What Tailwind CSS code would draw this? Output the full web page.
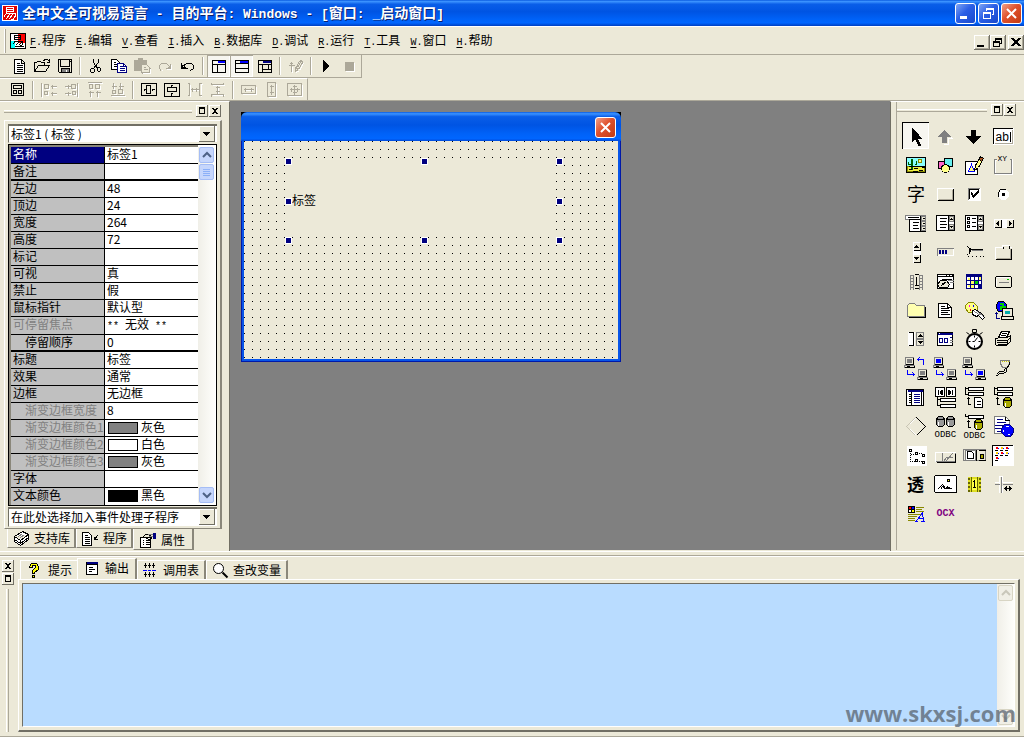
<!DOCTYPE html>
<html lang="zh-CN">
<head>
  <meta charset="UTF-8" />
  <title>全中文全可视易语言</title>
  <script src="https://cdn.jsdelivr.net/npm/@tailwindcss/browser@4"></script>
</head>
<body class="h-screen flex flex-col overflow-hidden bg-[#ece9d8] text-black text-[12px] leading-[16px] font-['Noto_Sans_CJK_SC',sans-serif] [shape-rendering:crispEdges] [&_svg]:block [&_svg]:shrink-0">

  <!-- shared icon parts -->
  <svg width="0" height="0" class="absolute">
    <symbol id="pc" viewBox="-.5 -.5 12 11" fill="#ece9d8" stroke="#808080">
      <path d="M1 0h8v7h-8z"/><path d="M3 2h4v3h-4z" fill="currentColor" stroke="currentColor"/>
      <path d="M0 8h10v2h-10z"/><path d="M9 0v7h-8M10 8v2h-10" fill="none" stroke="#000"/><path d="M2 9h3" stroke="#000"/>
    </symbol>
    <symbol id="db" viewBox="-.5 -.5 9 11" stroke="#000" fill="currentColor">
      <path d="M0 2v6l2 2h4l2-2v-6z"/><path d="M2 0h4l2 2-2 1h-4l-2-1z"/><path d="M2 5v4" stroke="#fff"/>
    </symbol>
    <symbol id="max" viewBox="0 0 12 12"><path d="M3 2h6v7H3zM4 4v4h4V4z" fill-rule="evenodd"/></symbol>
    <symbol id="cls" viewBox="0 0 12 12"><path d="M3 3h2v1h2V3h2v1H8v1H7v2h1v1h1v1H7V8H5v1H3V8h1V7h1V5H4V4H3z"/></symbol>
  </svg>

  <header class="h-[26px] shrink-0 flex items-center px-[2px] gap-1 text-white bg-[linear-gradient(#0a5be0_0%,#3c93ff_6%,#0a5ee8_16%,#0054e3_45%,#0062f8_75%,#0066ff_88%,#003fc0_100%)]">
    <svg class="size-4" viewBox="0 0 16 16"><path fill="#fff" d="M0 0h16v16H0z"/><path fill="#e00000" d="M1 1h14v14H1z"/><path d="M4.500 2.500h7v4h-7zM4 4.500h7M5 7.500l-3 4M4 8.500h9v3l-2 3h-2M8 9l-4 5M11 9l-4 5" fill="none" stroke="#fff"/></svg>
    <h1 class="flex-1 whitespace-pre text-[14px] leading-[18px] font-bold [text-shadow:1px_1px_#0a1f6b] [&_span]:font-['Liberation_Mono'] [&_span]:text-[13px]">全中文全可视易语言<span> - </span>目的平台<span>: Windows - [</span>窗口<span>: _</span>启动窗口<span>]</span></h1>
    <div class="flex gap-[2px] [&_svg]:size-[19px]">
      <button aria-label="最小化" class="size-[21px] rounded-[3px] border border-white bg-[linear-gradient(135deg,#7ea5f4,#2b5fe6_45%,#1848cc)]"><svg viewBox="0 0 19 19"><path d="M4 12h7v3H4z" fill="#fff"/></svg></button>
      <button aria-label="还原" class="size-[21px] rounded-[3px] border border-white bg-[linear-gradient(135deg,#7ea5f4,#2b5fe6_45%,#1848cc)]"><svg viewBox="-.5 -.5 19 19"><path d="M7 6v-2h7v6h-2M7 5h7M4 8h7v6h-7zM4 9h7" fill="none" stroke="#fff"/></svg></button>
      <button aria-label="关闭" class="size-[21px] rounded-[3px] border border-white bg-[linear-gradient(135deg,#f0a08a,#e0512c_45%,#c23a12)]"><svg viewBox="0 0 19 19" shape-rendering="auto"><path d="M5 5l9 9M14 5l-9 9" stroke="#fff" stroke-width="2"/></svg></button>
    </div>
  </header>

  <nav class="h-[29px] shrink-0 flex items-center pl-1 border-b border-b-[#aca899] border-t border-t-white">
    <span class="w-[2px] h-6 border-l border-white bg-[#aca899] mr-1"></span>
    <svg class="size-4 mr-1" viewBox="-.5 -.5 16 16" fill="none"><path d="M0 0h15v15h-15z" fill="#fff" stroke="#000"/><path d="M8 1h6v8h-6z" fill="#f00" stroke="#f00"/><path d="M1 8h3v6h-3z" fill="#0ff" stroke="#0ff"/><path d="M4 2h6v4h-6zM4 4h6M3 8h9v3M5 8l-3 3M8 9l-3 3M11 9l-3 3M4 13h9M12 11l-3 2" stroke="#000"/></svg>
    <ul class="flex-1 flex gap-[10px] pt-[2px] [&_button]:flex [&_button]:items-baseline [&_u]:font-['Liberation_Mono'] [&_u]:text-[10px] [&_span]:font-['Liberation_Mono'] [&_span]:text-[10px] [&_u]:underline-offset-2">
      <li><button><u>F</u><span>.</span>程序</button></li>
      <li><button><u>E</u><span>.</span>编辑</button></li>
      <li><button><u>V</u><span>.</span>查看</button></li>
      <li><button><u>I</u><span>.</span>插入</button></li>
      <li><button><u>B</u><span>.</span>数据库</button></li>
      <li><button><u>D</u><span>.</span>调试</button></li>
      <li><button><u>R</u><span>.</span>运行</button></li>
      <li><button><u>T</u><span>.</span>工具</button></li>
      <li><button><u>W</u><span>.</span>窗口</button></li>
      <li><button><u>H</u><span>.</span>帮助</button></li>
    </ul>
    <div class="flex pt-1 [&_svg]:w-4 [&_svg]:h-[15px] [&_button]:shadow-[inset_-1px_-1px_#716f64,inset_1px_1px_#fff,inset_-2px_-2px_#aca899]">
      <button aria-label="最小化窗口"><svg viewBox="0 0 16 15"><path d="M3 10h7v2H3z"/></svg></button>
      <button aria-label="还原窗口"><svg viewBox="-.5 -.5 16 15" fill="none" stroke="#000"><path d="M5 5v-2h6v5h-2M5 4h6M3 6h6v5h-6zM3 7h6"/></svg></button>
      <button aria-label="关闭窗口" class="ml-[2px]"><svg viewBox="0 0 16 15"><path d="M3 3h3v1h1v1h2V4h1V3h3v1h-1v1h-1v1h-1v2h1v1h1v1h1v1h-3v-1H9V9H7v1H6v1H3v-1h1V9h1V8h1V6H5V5H4V4H3z"/></svg></button>
    </div>
  </nav>

  <!-- toolbars -->
  <div class="h-[23px] shrink-0 flex [&_svg]:size-[18px] [&_svg]:fill-none [&_button]:w-[23px] [&_button]:h-[22px] [&_button]:flex [&_button]:items-center [&_button]:justify-center">
    <div class="flex items-center pl-[7px] border-r border-b border-[#aca899]">
      <button aria-label="新建"><svg viewBox="-.5 -.5 18 18" stroke="#000"><path d="M4 2h7l3 3v11h-10zM11 2v4h3" fill="#fff"/><path d="M6 6h3M6 8h6M6 10h6M6 12h6M6 14h6"/></svg></button>
      <button aria-label="打开"><svg viewBox="-.5 -.5 18 18" stroke="#000"><path d="M1 14v-9h2l1-1h3l1 1h3v3M1 14l4-6h11l-4 6zM10 3l2-1h2l2 2M16 1v4h-3"/></svg></button>
      <button aria-label="保存"><svg viewBox="-.5 -.5 18 18" stroke="#000"><path d="M2 2h13v13h-12l-1-1zM4 2v7h9v-7M13 4h1"/><path d="M5 11h8v4h-8z" fill="#808080"/><path d="M10 12v2" stroke="#fff"/></svg></button>
      <span class="w-[2px] h-[18px] mx-[3px] border-l border-[#aca899] bg-white"></span>
      <button aria-label="剪切"><svg viewBox="-.5 -.5 18 18" stroke="#000"><path d="M6 1v4l4 6M11 1v4l-5 6M4 11h2l1 1v2l-1 1h-2l-1-1v-2zM10 10h2l1 1v2l-1 1h-1l-1-1z"/></svg></button>
      <button aria-label="复制"><svg viewBox="-.5 -.5 18 18" stroke="#000"><path d="M1 2h5l3 3v7h-8z" fill="#fff"/><path d="M3 5h2M3 7h4M3 9h4"/><path d="M7 6h6l3 3v6h-9z" fill="#fff" stroke="#000080"/><path d="M9 9h3M9 11h5M9 13h5M13 6v3h3" stroke="#000080"/></svg></button>
      <button aria-label="粘贴" disabled><svg viewBox="-.5 -.5 18 18" stroke="#aca899"><path d="M1 3h12v10h-12zM5 1h4v2h-4z" fill="#aca899"/><path d="M8 7h5l3 3v5h-8z" fill="#ece9d8"/><path d="M10 10h2M10 12h4M17 10v6h-9" /><path d="M17 11v5h-8" stroke="#fff"/></svg></button>
      <button aria-label="重做" disabled><svg viewBox="-.5 -.5 18 18" stroke="#aca899"><path d="M15 7v5h-5M5 13h1" stroke="#fff"/><path d="M4 12l-1-1v-3l2-2h5l4 4M14 6v5h-5M13 8v2M12 9v1M4 11v2"/></svg></button>
      <button aria-label="撤消"><svg viewBox="-.5 -.5 18 18" stroke="#000"><path d="M2 5v6h6M3 7v3M4 9h1M3 9l4-3h5l2 2v3l-3 2M3 10h3M5 8v2"/></svg></button>
      <span class="w-[2px] h-[18px] mx-[3px] border-l border-[#aca899] bg-white"></span>
      <button aria-label="支持库面板" class="bg-[#f7f6f0] shadow-[inset_1px_1px_#aca899,inset_-1px_-1px_#fff]"><svg viewBox="-.5 -.5 18 18" stroke="#000"><path d="M2 3h13v12h-13zM2 7h13M7 7v8"/><path d="M7 4h7M7 5h7" stroke="#00f"/><path d="M4 5h2" stroke="#fff"/></svg></button>
      <button aria-label="输出面板" class="bg-[#f7f6f0] shadow-[inset_1px_1px_#aca899,inset_-1px_-1px_#fff]"><svg viewBox="-.5 -.5 18 18" stroke="#000"><path d="M2 3h13v12h-13zM2 6h13M2 11h13"/><path d="M6 4h8M6 5h8" stroke="#00f"/></svg></button>
      <button aria-label="组件面板"><svg viewBox="-.5 -.5 18 18" stroke="#000"><path d="M2 3h13v12h-13zM2 7h13M6 7v8M6 12h9M12 7v5"/><path d="M6 4h8M6 5h8" stroke="#000080"/></svg></button>
      <span class="w-[2px] h-[18px] mx-[3px] border-l border-[#aca899] bg-white"></span>
      <button aria-label="编辑" disabled><svg viewBox="-.5 -.5 18 18" stroke="#aca899"><path d="M5 15v-6M9 15l3-2 4-7" stroke="#fff"/><path d="M4 14v-9M2 7l2-2 2 2M1 8h6M12 4l-4 7v3l3-2 4-7-1-2zM10 10l3-5M9 11l2 1"/></svg></button>
      <span class="w-[2px] h-[18px] mx-[3px] border-l border-[#aca899] bg-white"></span>
      <button aria-label="运行"><svg viewBox="0 0 18 18"><path d="M5 3l6 6-6 6z" fill="#000"/></svg></button>
      <button aria-label="停止" disabled><svg viewBox="0 0 18 18"><path d="M5 6h9v9H5z" fill="#fff"/><path d="M4 5h9v9H4z" fill="#aca899"/></svg></button>
    </div>
  </div>
  <div class="h-[22px] shrink-0 flex [&_svg]:size-[18px] [&_svg]:fill-none [&_button]:w-[23px] [&_button]:h-[22px] [&_button]:flex [&_button]:items-center [&_button]:justify-center">
    <div class="flex items-center pl-[6px] pr-[1px] border-r border-t border-t-white border-r-[#aca899]">
      <button aria-label="窗体"><svg viewBox="-.5 -.5 18 18" stroke="#000"><path d="M2 2h12v12h-12zM4 4h8v3h-8zM4 9h3v3h-3zM9 9h3v3h-3z"/></svg></button>
      <span class="w-[2px] h-[18px] mx-[3px] border-l border-[#aca899] bg-white"></span>
      <button aria-label="左对齐" disabled><svg viewBox="-.5 -.5 18 18" stroke="#aca899"><path d="M2 2v14M5 8h4v-4M5 14h3v-4M12 13h4M12 6h4" stroke="#fff"/><path d="M1 1v14M4 3h4v4h-4zM4 10h3v3h-3zM10 5h6M12 3v4M10 12h6M12 10v4"/></svg></button>
      <button aria-label="右对齐" disabled><svg viewBox="-.5 -.5 18 18" stroke="#aca899"><path d="M15 2v14M9 8h4v-4M10 14h3v-3M2 6h6M2 13h6" stroke="#fff"/><path d="M14 1v14M8 3h4v4h-4zM9 10h3v3h-3zM1 5h6M5 3v4M1 12h6M5 10v4"/></svg></button>
      <button aria-label="顶对齐" disabled><svg viewBox="-.5 -.5 18 18" stroke="#aca899"><path d="M2 2h14M4 8h3M10 8h4v-4M5 10v6M12 10v6" stroke="#fff"/><path d="M1 1h14M3 3h3v4h-3zM9 3h4v4h-4zM4 9v6M2 11h5M11 9v6M9 11h5"/></svg></button>
      <button aria-label="底对齐" disabled><svg viewBox="-.5 -.5 18 18" stroke="#aca899"><path d="M2 15h14M4 13h3M10 13h4v-4M5 2v6M12 2v6" stroke="#fff"/><path d="M1 14h14M3 9h3v3h-3zM9 8h4v4h-4zM4 1v6M2 5h5M11 1v6M9 5h5"/></svg></button>
      <span class="w-[2px] h-[18px] mx-[3px] border-l border-[#aca899] bg-white"></span>
      <button aria-label="水平居中"><svg viewBox="-.5 -.5 18 18" stroke="#000"><path d="M1 2h15v12h-15zM6 4h4v8h-4zM3 8h2M11 8h3M4 7v2M12 7v2"/></svg></button>
      <button aria-label="垂直居中"><svg viewBox="-.5 -.5 18 18" stroke="#000"><path d="M1 2h15v13h-15zM4 6h9v4h-9zM8 3v2M8 11v3M7 4h2M7 12h2"/></svg></button>
      <button aria-label="水平等距" disabled><svg viewBox="-.5 -.5 18 18" stroke="#aca899"><path d="M4 3v12M5 9h8M16 3h-1v12" stroke="#fff"/><path d="M1 2h2v12h-2M15 2h-2v12h2M4 8h8M6 6v4M10 6v4"/></svg></button>
      <button aria-label="垂直等距" disabled><svg viewBox="-.5 -.5 18 18" stroke="#aca899"><path d="M3 4h12M3 14h12M9 5v7" stroke="#fff"/><path d="M2 1v2h12v-2M2 15v-2h12v2M8 4v8M6 6h4M6 10h4"/></svg></button>
      <span class="w-[2px] h-[18px] mx-[3px] border-l border-[#aca899] bg-white"></span>
      <button aria-label="同宽" disabled><svg viewBox="-.5 -.5 18 18" stroke="#aca899"><path d="M2 13h14v-8M4 9h8" stroke="#fff"/><path d="M1 4h14v8h-14zM3 8h10M5 6v4M11 6v4"/></svg></button>
      <button aria-label="同高" disabled><svg viewBox="-.5 -.5 18 18" stroke="#aca899"><path d="M5 16h8v-14" stroke="#fff"/><path d="M4 1h8v14h-8zM8 3v10M6 5h4M6 11h4"/></svg></button>
      <button aria-label="同大小" disabled><svg viewBox="-.5 -.5 18 18" stroke="#aca899"><path d="M2 15h14v-12" stroke="#fff"/><path d="M1 2h14v12h-14zM3 8h10M8 3v10M5 6v4M11 6v4M6 5h4M6 11h4"/></svg></button>
    </div>
  </div>

  <main class="flex-1 min-h-0 flex border-t border-[#aca899]">

    <!-- property panel -->
    <aside class="w-[230px] shrink-0 flex flex-col pl-1 border-t border-white border-r border-r-[#716f64]">
      <div class="h-[18px] shrink-0 flex items-center gap-[1px]">
        <span class="flex-1 h-[3px] mr-[3px] border-t border-white border-b border-b-[#aca899]"></span>
        <button aria-label="停靠" class="size-3 shadow-[inset_-1px_-1px_#716f64,inset_1px_1px_#fff]"><svg class="size-3"><use href="#max"/></svg></button>
        <button aria-label="关闭面板" class="size-3 mr-[8px] shadow-[inset_-1px_-1px_#716f64,inset_1px_1px_#fff]"><svg class="size-3"><use href="#cls"/></svg></button>
      </div>
      <section class="flex-1 min-h-0 w-[218px] flex flex-col gap-[1px] pl-[3px] pr-[3px] pt-[3px] pb-[1px] border-t border-l border-white border-r-2 border-r-[#8a877a] border-b border-b-[#8a877a]">
        <div class="relative h-[19px] shrink-0">
          <select aria-label="组件" class="w-full h-full appearance-none bg-white pl-[2px] border-t-2 border-l border-[#716f64] border-b border-b-[#ece9d8]"><option>标签1 ( 标签 )</option></select>
          <svg class="absolute right-[2px] top-[2px] w-4 h-4 bg-[#ece9d8] shadow-[inset_-1px_-1px_#716f64,inset_1px_1px_#fff] pointer-events-none" viewBox="0 0 16 16"><path d="M4 6h7v1H4zM5 7h5v1H5zM6 8h3v1H6zM7 9h1v1H7z"/></svg>
        </div>
        <div class="flex-1 min-h-0 flex border border-black bg-white pr-[1px]">
          <div class="flex-1 border-t-2 border-l-2 border-[#8a877a]">
            <table class="w-full table-fixed border-separate border-spacing-0 text-left [&_th]:font-normal [&_th]:bg-[#c0c0c0] [&_th]:h-[17px] [&_td]:h-[17px] [&_th]:p-0 [&_th]:pl-[2px] [&_td]:p-0 [&_td]:pl-[2px] [&_th]:border-b [&_td]:border-b [&_th]:border-r [&_th]:border-black [&_td]:border-black [&_th]:whitespace-nowrap [&_td]:whitespace-nowrap [&_th]:align-top [&_td]:align-top [&_tr]:leading-[14px]">
              <colgroup><col class="w-[94px]"><col></colgroup>
              <tbody>
                <tr><th scope="row" class="bg-[#000080]! text-white">名称</th><td>标签1</td></tr>
                <tr class="[&>*]:border-b-2!"><th scope="row">备注</th><td></td></tr>
                <tr><th scope="row">左边</th><td>48</td></tr>
                <tr><th scope="row">顶边</th><td>24</td></tr>
                <tr><th scope="row">宽度</th><td>264</td></tr>
                <tr><th scope="row">高度</th><td>72</td></tr>
                <tr><th scope="row">标记</th><td></td></tr>
                <tr><th scope="row">可视</th><td>真</td></tr>
                <tr><th scope="row">禁止</th><td>假</td></tr>
                <tr><th scope="row">鼠标指针</th><td>默认型</td></tr>
                <tr><th scope="row" class="text-[#808080]">可停留焦点</th><td class="whitespace-pre! [&_span]:font-['Liberation_Mono'] [&_span]:text-[10px]"><span>** </span>无效<span> **</span></td></tr>
                <tr class="[&>*]:border-b-2!"><th scope="row" class="pl-[14px]!">停留顺序</th><td>0</td></tr>
                <tr><th scope="row">标题</th><td>标签</td></tr>
                <tr><th scope="row">效果</th><td>通常</td></tr>
                <tr><th scope="row">边框</th><td>无边框</td></tr>
                <tr><th scope="row" class="pl-[14px]! text-[#808080]">渐变边框宽度</th><td>8</td></tr>
                <tr><th scope="row" class="pl-[14px]! text-[#808080]">渐变边框颜色1</th><td><div class="flex items-center gap-[3px] pl-[1px]"><span class="w-[30px] h-3 mt-[2px] border border-black bg-[#808080]"></span>灰色</div></td></tr>
                <tr><th scope="row" class="pl-[14px]! text-[#808080]">渐变边框颜色2</th><td><div class="flex items-center gap-[3px] pl-[1px]"><span class="w-[30px] h-3 mt-[2px] border border-black bg-white"></span>白色</div></td></tr>
                <tr><th scope="row" class="pl-[14px]! text-[#808080]">渐变边框颜色3</th><td><div class="flex items-center gap-[3px] pl-[1px]"><span class="w-[30px] h-3 mt-[2px] border border-black bg-[#808080]"></span>灰色</div></td></tr>
                <tr><th scope="row">字体</th><td></td></tr>
                <tr class="[&>*]:border-b-0!"><th scope="row">文本颜色</th><td><div class="flex items-center gap-[3px] pl-[1px]"><span class="w-[30px] h-3 mt-[2px] border border-black bg-black"></span>黑色</div></td></tr>
              </tbody>
            </table>
          </div>
          <div class="w-[17px] flex flex-col mt-[2px] mb-[2px] px-[1px] bg-[linear-gradient(90deg,#f0efe8,#fefefb)]">
            <button aria-label="向上" class="h-4 rounded-[2px] border border-[#a5bdf5] bg-[#c6d6fc]"><svg class="w-[13px] h-[14px]" viewBox="0 0 13 14" shape-rendering="auto"><path d="M3 9l4-4 4 4" fill="none" stroke="#4d6185" stroke-width="2"/></svg></button>
            <div class="h-4 mt-[1px] rounded-[2px] border border-[#a5bdf5] bg-[#c6d6fc] flex items-center justify-center"><svg class="size-[7px]" viewBox="0 0 7 7"><path d="M0 0h7v1H0zM0 2h7v1H0zM0 4h7v1H0zM0 6h7v1H0z" fill="#8cb0f8"/></svg></div>
            <div class="flex-1"></div>
            <button aria-label="向下" class="h-4 rounded-[2px] border border-[#a5bdf5] bg-[#c6d6fc]"><svg class="w-[13px] h-[14px]" viewBox="0 0 13 14" shape-rendering="auto"><path d="M3 5l4 4 4-4" fill="none" stroke="#4d6185" stroke-width="2"/></svg></button>
          </div>
        </div>
        <div class="relative h-5 shrink-0">
          <select aria-label="事件处理子程序" class="w-full h-full appearance-none bg-white pl-[2px] pb-[2px] border-t-2 border-l border-[#716f64] border-b border-b-[#ece9d8]"><option>在此处选择加入事件处理子程序</option></select>
          <svg class="absolute right-[2px] top-[2px] w-4 h-4 bg-[#ece9d8] shadow-[inset_-1px_-1px_#716f64,inset_1px_1px_#fff] pointer-events-none" viewBox="0 0 16 16"><path d="M4 6h7v1H4zM5 7h5v1H5zM6 8h3v1H6zM7 9h1v1H7z"/></svg>
        </div>
      </section>
      <div class="h-[22px] shrink-0 flex items-start pl-[3px] [&_svg]:size-[18px] [&_svg]:fill-none [&_button]:flex [&_button]:items-center [&_button]:whitespace-nowrap [&_button]:border-l [&_button]:border-white [&_button]:border-r-2 [&_button]:border-r-[#8a877a] [&_button]:border-b [&_button]:border-b-[#8a877a]">
        <button class="w-[69px] h-[19px] pl-1 gap-1"><svg viewBox="-.5 -.5 18 18" stroke="#000"><path d="M2 7l8-5 6 3-8 6zM2 7v3l6 4 8-6v-3M2 10v2l6 4 8-6v-2" fill="#fff"/><path d="M2 10l6 4 8-6M8 11v3"/><path d="M6 7l4-3M8 8l4-3" stroke="#808080"/></svg>支持库</button>
        <button class="w-[57px] h-[19px] pl-[3px] gap-[5px]"><svg viewBox="-.5 -.5 18 18" stroke="#000"><path d="M2 3h6l3 3v10h-9z" fill="#fff"/><path d="M4 6h3M4 8h5M4 10h5M4 12h5M4 14h5M14 7v3h3M14 10l3-4"/></svg>程序</button>
        <button class="w-[61px] h-[21px] pl-[5px] gap-1 pt-[2px]"><svg viewBox="-.5 -.5 18 18" stroke="#000"><path d="M1 6h10v10h-10z" fill="#fff"/><path d="M3 9h1M6 9h4M3 11h1M6 11h4M3 13h1M6 13h4M3 6l3-3h3l3 2v2l-3 1-3-2"/><path d="M14 2h2v5h-2z" fill="#000080" stroke="#000080"/><path d="M8 3h5M9 5h4" stroke="#808080"/></svg>属性</button>
      </div>
    </aside>

    <!-- form designer -->
    <section class="flex-1 relative bg-[#808080] mb-[1px]">
      <div class="absolute left-[11px] top-[11px] w-[380px] h-[250px] flex flex-col bg-black">
        <div class="h-[29px] shrink-0 rounded-t-[6px] flex items-center justify-end pr-[5px] bg-[linear-gradient(#0a5be0_0%,#3c93ff_6%,#0a5ee8_16%,#0054e3_45%,#0062f8_75%,#0066ff_92%,#0048d8_100%)]">
          <button aria-label="关闭窗体" class="size-[21px] mt-[2px] rounded-[3px] border border-white bg-[linear-gradient(135deg,#f0a08a,#e0512c_45%,#c23a12)]"><svg class="size-[19px]" viewBox="0 0 19 19" shape-rendering="auto"><path d="M5 5l9 9M14 5l-9 9" stroke="#fff" stroke-width="2"/></svg></button>
        </div>
        <div class="flex-1 flex border border-t-0 border-[#0019a8]">
          <div class="flex-1 relative bg-[#ece9d8] border-x-[2px] border-b-[2px] border-[#0855e8]">
            <svg class="absolute inset-0 w-full h-full"><pattern id="dots" width="8" height="8" patternUnits="userSpaceOnUse"><path d="M0 0h1v1H0z"/></pattern><path d="M0 0h374v218H0z" fill="url(#dots)"/></svg>
            <div class="absolute left-[48px] top-[24px] w-[264px] h-[72px] bg-[#ece9d8] flex items-center pb-[2px]">标签</div>
            <div class="absolute left-[41px] top-[17px] w-[278px] h-[86px] flex flex-col justify-between [&_i]:block [&_i]:size-[7px] [&_i]:bg-[#000080] [&_i]:border [&_i]:border-white">
              <div class="flex justify-between"><i></i><i></i><i></i></div>
              <div class="flex justify-between"><i></i><i></i></div>
              <div class="flex justify-between"><i></i><i></i><i></i></div>
            </div>
          </div>
        </div>
      </div>
    </section>

    <!-- component toolbox -->
    <aside class="w-[134px] shrink-0 pl-[5px] pb-[1px] border-t border-white border-l border-l-[#716f64]">
      <div class="h-full border-l border-[#aca899]">
        <div class="h-[16px] flex items-center gap-[1px]">
          <span class="flex-1 h-[3px] mr-[3px] border-t border-white border-b border-b-[#aca899]"></span>
          <button aria-label="停靠工具箱" class="size-3 shadow-[inset_-1px_-1px_#716f64,inset_1px_1px_#fff]"><svg class="size-3"><use href="#max"/></svg></button>
          <button aria-label="关闭工具箱" class="size-3 mr-[8px] shadow-[inset_-1px_-1px_#716f64,inset_1px_1px_#fff]"><svg class="size-3"><use href="#cls"/></svg></button>
        </div>
        <div class="grid grid-cols-[repeat(4,27px)] gap-[2px] pl-[5px] pt-1 [&_button]:size-[27px] [&_button>svg]:size-[27px] [&_button>svg]:fill-none [&_button>svg]:stroke-black [&_text]:fill-black [&_text]:stroke-none">
          <button aria-label="选择" class="bg-[#f7f6f0] shadow-[inset_1px_1px_#000,inset_-1px_-1px_#fff]"><svg viewBox="-.5 -.5 27 27"><path d="M10 6v13l3-3 3 7h2l-3-7h4z" fill="#000"/></svg></button>
          <button aria-label="上移"><svg viewBox="-.5 -.5 27 27"><path d="M14 9l7 7h-4v6h-5" stroke="#fff"/><path d="M13 8l6 6h-4v6h-4v-6h-4z" fill="#808080" stroke="#808080"/></svg></button>
          <button aria-label="下移"><svg viewBox="-.5 -.5 27 27"><path d="M11 8h4v6h5l-7 7-7-7h5z" fill="#000"/></svg></button>
          <button aria-label="编辑框"><svg viewBox="-.5 -.5 27 27"><path d="M4 6h20v16h-20z" fill="#fff" stroke="#fff"/><path d="M4 21v-15h19"/><path d="M5 21h18v-14" stroke="#aca899"/><text x="6" y="18" font-size="12" font-family="Liberation Sans">ab</text><path d="M21 9v10"/></svg></button>

          <button aria-label="图片框"><svg viewBox="-.5 -.5 27 27"><path d="M4 6h19v15h-19z" fill="#8ff"/><path d="M5 15h17v5h-17z" fill="#ee4" stroke="#880"/><path d="M16 8h3v3h-3z" fill="#ff8" stroke="#880"/><path d="M9 7v11M10 7v11M6 10v3h3M12 13h2v-4" stroke="#006000"/><path d="M6 15h17M6 18h3M11 17h4M16 19h4M10 20h5M19 16h3M13 15h5"/></svg></button>
          <button aria-label="外形框"><svg viewBox="-.5 -.5 27 27"><path d="M7 10h7v7h-7z" fill="#f6c"/><path d="M13 7h8v8h-8z" fill="#6ee"/><circle cx="14" cy="17" r="4" fill="#ff8"/></svg></button>
          <button aria-label="画板"><svg viewBox="-.5 -.5 27 27"><path d="M5 10h12v13h-12z" fill="#fff"/><path d="M8 20l3-7 3 7z" fill="#ff8" stroke="#00f"/><path d="M20 5l3 2-5 9-4 3 1-5z" fill="#ff8"/><path d="M20 5l3 2-2 3-2-2z" fill="#a52"/></svg></button>
          <button aria-label="分组框"><svg viewBox="-.5 -.5 27 27"><path d="M8 9h-2v14h17v-15h-2" stroke="#fff"/><path d="M7 8h-2v14h17v-14h-2" stroke="#808080"/><text x="8" y="9" font-size="8" font-family="Liberation Mono">XY</text></svg></button>

          <button aria-label="标签"><svg viewBox="0 0 27 27"><text x="5" y="21" font-size="18">字</text></svg></button>
          <button aria-label="按钮"><svg viewBox="-.5 -.5 27 27"><path d="M6 19v-11h16" stroke="#fff"/><path d="M6 20h16v-12"/><path d="M7 19h14v-10" stroke="#aca899"/></svg></button>
          <button aria-label="选择框"><svg viewBox="-.5 -.5 27 27"><path d="M8 8h12v12h-12z" fill="#fff" stroke="#fff"/><path d="M8 19v-11h11" stroke="#808080"/><path d="M9 18v-9h9"/><path d="M11 13l2 3 5-5M11 14l2 3 5-5M11 12l2 3 5-5"/></svg></button>
          <button aria-label="单选框"><svg viewBox="-.5 -.5 27 27"><circle cx="14" cy="14" r="5" fill="#fff" stroke="#fff"/><path d="M9 16v-4l2-3h5l1 1"/><path d="M13 13h2v2h-2z" fill="#000"/></svg></button>

          <button aria-label="组合框"><svg viewBox="-.5 -.5 27 27"><path d="M3 6h20v4h-20z" fill="#fff" stroke="#808080"/><path d="M7 10h16v12h-16z" fill="#fff"/><path d="M18 6v16M5 8h11M10 13h6M10 16h5M10 19h6"/><path d="M19 7h4v4h-4zM19 12h4v4h-4zM19 17h4v4h-4z" fill="#ece9d8" stroke="#808080"/><path d="M20 9h2M20 14h2M20 19h2"/></svg></button>
          <button aria-label="列表框"><svg viewBox="-.5 -.5 27 27"><path d="M5 6h18v15h-18z" fill="#fff"/><path d="M17 6v15M8 9h7M8 12h6M8 15h7M8 18h6"/><path d="M18 7h4v5h-4zM18 15h4v5h-4z" fill="#ece9d8" stroke="#808080"/><path d="M19 10l1-1 1 1zM19 17l1 1 1-1z" fill="#000"/></svg></button>
          <button aria-label="选择列表框"><svg viewBox="-.5 -.5 27 27"><path d="M5 6h18v15h-18z" fill="#fff"/><path d="M17 6v15M7 8h2v2h-2zM7 12h2v2h-2zM7 16h2v2h-2zM11 9h4M11 13h4M11 17h4"/><path d="M18 7h4v5h-4zM18 15h4v5h-4z" fill="#ece9d8" stroke="#808080"/><path d="M19 10l1-1 1 1zM19 17l1 1 1-1z" fill="#000"/></svg></button>
          <button aria-label="横向滚动条"><svg viewBox="-.5 -.5 27 27"><path d="M5 10h19v8h-19z" fill="#fff" stroke="#fff"/><path d="M5 10h7v8h-7zM17 10h7v8h-7z" fill="#ece9d8" stroke="#fff"/><path d="M5 18h7v-8M17 18h7v-8"/><path d="M7 14l2-2v4zM20 12l2 2-2 2z" fill="#000"/></svg></button>

          <button aria-label="纵向滚动条"><svg viewBox="-.5 -.5 27 27"><path d="M11 4h7v20h-7z" fill="#fff" stroke="#fff"/><path d="M11 4h7v8h-7zM11 16h7v8h-7z" fill="#ece9d8" stroke="#fff"/><path d="M11 12h7v-8M11 24h7v-8"/><path d="M12 9l2-2 2 2zM12 19l2 2 2-2z" fill="#000"/></svg></button>
          <button aria-label="进度条"><svg viewBox="-.5 -.5 27 27"><path d="M6 17h16v-7" stroke="#fff"/><path d="M6 17v-7h16" stroke="#808080"/><path d="M8 12h1v3h-1zM11 12h1v3h-1zM14 12h1v3h-1z" fill="#000080" stroke="#000080"/></svg></button>
          <button aria-label="滑块条"><svg viewBox="-.5 -.5 27 27"><path d="M7 8l2 2v5M10 11h12M10 9v4M8 15h1"/><path d="M11 12h11" stroke="#808080"/><path d="M7 18h1M11 18h1M15 18h1M19 18h1M6 16h1M22 18h1"/></svg></button>
          <button aria-label="选择夹"><svg viewBox="-.5 -.5 27 27"><path d="M6 20v-11h7M13 9v-2h7v2h2" stroke="#fff"/><path d="M6 21h16v-11M14 8v2M20 7v3"/><path d="M7 20h14v-10" stroke="#aca899"/></svg></button>

          <button aria-label="影像框"><svg viewBox="-.5 -.5 27 27"><path d="M8 7v15M20 7v15M11 7v15M17 7v15" stroke="#808080"/><path d="M8 8h3M8 11h3M8 14h3M8 17h3M8 20h3M17 8h3M17 11h3M17 14h3M17 17h3M17 20h3" stroke="#808080"/><path d="M12 7h4M12 21h4M13 11l1-1v8M12 18h4"/></svg></button>
          <button aria-label="日期框"><svg viewBox="-.5 -.5 27 27"><path d="M6 7h16v14h-16z" fill="#fff"/><path d="M6 9h16M14 8h1M17 8h1M20 8h1"/><path d="M16 13h6M18 15h4" stroke="#808080"/><path d="M6 17l3-4h6l3 4-2 3h-8z" fill="#ece9d8"/><path d="M10 18l5-4M10 16h2M10 12l10 0"/></svg></button>
          <button aria-label="月历"><svg viewBox="0 0 27 27"><path d="M6 7h16v15H6z" fill="#000080" stroke="none"/><path d="M7 10h3v3H7zM11 10h3v3h-3zM15 10h3v3h-3zM7 14h3v3H7zM15 18h3v3h-3zM19 14h2v3h-2zM7 18h3v3H7z" fill="#fff" stroke="none"/><path d="M8 11h2v2H8zM11 14h3v3h-3zM19 10h2v3h-2zM11 18h3v3h-3zM8 18h2v2H8z" fill="#ff6" stroke="none"/><path d="M15 14h3v3h-3z" fill="#0c0" stroke="none"/></svg></button>
          <button aria-label="驱动器框"><svg viewBox="-.5 -.5 27 27"><path d="M7 9h14l1 1v9l-1 1h-14l-1-1v-9z" fill="#ece9d8"/><path d="M7 10h13M7 11v7" stroke="#fff"/><path d="M9 15h10" stroke="#808080"/><path d="M17 12h2" stroke="#0c0"/></svg></button>

          <button aria-label="目录框"><svg viewBox="-.5 -.5 27 27"><path d="M5 20v-11l2-2h5l2 2h8v11z" fill="#ffffb0" stroke="#808080"/><path d="M6 21h17v-11"/></svg></button>
          <button aria-label="文件框"><svg viewBox="-.5 -.5 27 27"><path d="M7 7h9l4 4v10h-13z" fill="#fff"/><path d="M16 7v4h4M9 10h4M9 12h8M9 14h9M9 16h7M9 18h9"/></svg></button>
          <button aria-label="颜色选择器"><svg viewBox="-.5 -.5 27 27"><path d="M8 6h5l4 4v4h-4l-2 2h-3l-3-4v-3z" fill="#ff8" stroke="#880"/><path d="M8 9h1" stroke="#f0f" stroke-width="2"/><path d="M12 9h1" stroke="#00f" stroke-width="2"/><path d="M9 13h1" stroke="#f00" stroke-width="2"/><path d="M12 14l3-1 6 4 3 4-2 2-4-4-2 1-4-2z" fill="#fff"/><path d="M14 15l6 4M17 15l6 5" stroke="#808080"/></svg></button>
          <button aria-label="超级链接框"><svg viewBox="-.5 -.5 27 27"><path d="M9 5h5l3 3v4l-3 3h-5l-2-3v-4z" fill="#00f"/><path d="M10 7h3v3h-2v3M14 10h1v3" stroke="#0c0" stroke-width="2"/><path d="M7 22v-6M5 18l2-2 2 2M7 22h3" stroke="#000080"/><path d="M13 12h10v8h-10zM12 20h12v3h-12z" fill="#ece9d8"/><path d="M16 15h4v2h-4z" fill="#0aa" stroke="#0aa"/></svg></button>

          <button aria-label="调节器"><svg viewBox="-.5 -.5 27 27"><path d="M6 7h6v13h-6z" fill="#fff" stroke="#fff"/><path d="M6 7h5v13h-5"/><path d="M14 7h7v6h-7zM14 14h7v6h-7z" stroke="#808080"/><path d="M16 11l2-2 2 2zM16 16l2 2 2-2z" fill="#000"/></svg></button>
          <button aria-label="通用对话框"><svg viewBox="-.5 -.5 27 27"><path d="M6 7h15v13h-15z" fill="#fff"/><path d="M6 8h15M6 9h15M8 13h3v4h-3zM13 13h3v4h-3zM18 12h2" stroke="#000080"/><path d="M7 8h1" stroke="#fff"/><path d="M18 15h3M18 17h3" stroke="#808080"/></svg></button>
          <button aria-label="时钟"><svg viewBox="-.5 -.5 27 27" shape-rendering="auto"><circle cx="14" cy="16" r="7.500" fill="#fff" stroke-width="2"/><path d="M12 4h4v3h-4zM6 7l3 2M22 7l-3 2M14 16l3-4M14 16h-2M14 10v2M14 20v2M8 16h2M18 16h2"/></svg></button>
          <button aria-label="打印机"><svg viewBox="-.5 -.5 27 27"><path d="M9 12l3-6h8l-3 6z" fill="#fff"/><path d="M6 13h2l1-1h9l3-2v6l-4 4h-10l-1-1z" fill="#ece9d8"/><path d="M12 8h5M11 10h5M7 15h11l3-3M7 17h11M8 19h9M18 15v4"/></svg></button>

          <button aria-label="数据报"><svg viewBox="-.5 -.5 27 27" class="text-[#808080]"><use href="#pc" x="1.500" y="2.500" width="12" height="11"/><use href="#pc" x="14.500" y="14.500" width="12" height="11"/><path d="M15 5h6v5M17 3l-2 2 2 2M5 15v5h7M10 18l2 2-2 2" stroke="#00f"/></svg></button>
          <button aria-label="客户"><svg viewBox="-.5 -.5 27 27"><g class="text-[#00f]"><use href="#pc" x="1.500" y="2.500" width="12" height="11"/></g><g class="text-[#808080]"><use href="#pc" x="14.500" y="14.500" width="12" height="11"/></g><path d="M5 15v5h7M10 18l2 2-2 2" stroke="#00f"/></svg></button>
          <button aria-label="服务器"><svg viewBox="-.5 -.5 27 27"><g class="text-[#808080]"><use href="#pc" x="1.500" y="2.500" width="12" height="11"/></g><g class="text-[#00f]"><use href="#pc" x="14.500" y="14.500" width="12" height="11"/></g><path d="M5 15v5h7M10 18l2 2-2 2" stroke="#00f"/></svg></button>
          <button aria-label="端口"><svg viewBox="-.5 -.5 27 27"><path d="M11 6h9v3l-2 4h-5l-2-4z" fill="#ece9d8" stroke="#808080"/><path d="M12 7h1M14 7h1M16 7h1M18 7h1" stroke="#cc0"/><path d="M20 7v3l-3 4v3l-3 2h-4l-2 2h-2M16 14l-2 3h-4l-3 3"/></svg></button>

          <button aria-label="表格"><svg viewBox="-.5 -.5 27 27"><path d="M4 6h17v16h-17z" fill="#fff"/><path d="M5 7h15M5 8h15" stroke="#000080"/><path d="M9 8v14M19 8v14M6 11h2M6 13h2M6 15h2M6 17h2M6 19h2"/><path d="M11 11h6M11 13h6M11 15h6M11 17h6M11 19h6" stroke="#000080"/></svg></button>
          <button aria-label="数据源"><svg viewBox="-.5 -.5 27 27"><path d="M4 4h9v9h-9zM15 4h9v9h-9zM9 15h15v3h-15zM9 21h15v3h-15z" fill="#fff"/><path d="M7 6v5M11 6v5M17 6v5M21 6v5M6 13v9h3M6 16h3"/><path d="M9 8l1-1v4l-1-1zM19 8l-1-1v4l1-1z" fill="#000"/></svg></button>
          <button aria-label="通用提供者"><svg viewBox="-.5 -.5 27 27"><path d="M8 4h15v3h-15zM8 9h15v3h-15z" fill="#fff"/><path d="M5 3v8h3M5 5h3M8 14v7h2M6 16l2-2 2 2"/><path d="M14 14h6l2 2v8h-8z" fill="#fff"/><path d="M16 18h4M16 21h4"/></svg></button>
          <button aria-label="数据库提供者"><svg viewBox="-.5 -.5 27 27" class="text-[#aa0]"><path d="M8 4h15v3h-15zM8 9h15v3h-15z" fill="#fff"/><path d="M5 3v8h3M5 5h3M8 14v7h2M6 16l2-2 2 2"/><use href="#db" x="13.500" y="13.500" width="9" height="11"/></svg></button>

          <button aria-label="图形按钮"><svg viewBox="-.5 -.5 27 27"><path d="M14 5l-10 9 10 9" stroke="#fff"/><path d="M13 5l-9 9 9 9" stroke="#c8c4b4"/><path d="M14 5l9 9-9 9"/></svg></button>
          <button aria-label="外部数据库"><svg viewBox="-.5 -.5 27 27" class="text-[#999]"><use href="#db" x="4.500" y="3.500" width="9" height="11"/><use href="#db" x="14.500" y="3.500" width="9" height="11"/><text x="3" y="24" font-size="9" font-family="Liberation Mono">ODBC</text></svg></button>
          <button aria-label="外部数据提供者"><svg viewBox="-.5 -.5 27 27" class="text-[#aa0]"><path d="M8 3h15v3h-15z" fill="#fff"/><path d="M5 1v3h3M8 8v7h2M6 10l2-2 2 2"/><use href="#db" x="13.500" y="6.500" width="9" height="11"/><text x="3" y="25" font-size="9" font-family="Liberation Mono">ODBC</text></svg></button>
          <button aria-label="超文本浏览框"><svg viewBox="-.5 -.5 27 27"><path d="M5 4h11l4 4v13h-15z" fill="#fff" stroke="#808080"/><path d="M16 4v4h4" /><path d="M7 7h6M7 10h9M5 13h9M5 16h7M7 19h5" stroke="#000080"/><path d="M15 12h5l4 4v4l-3 4h-5l-4-4v-4z" fill="#00f" stroke="#000080"/><path d="M16 14h3M14 17v2M18 22h2" stroke="#fff"/></svg></button>

          <button aria-label="树型框"><svg viewBox="-.5 -.5 27 27"><path d="M5 5h19v19h-19z" fill="#fff" stroke="#fff"/><path d="M7 8h2v2h-2zM13 11h2v2h-2zM13 18h2v2h-2zM20 13h2v2h-2zM20 20h2v2h-2z"/><path d="M8 11v9h4M8 13h4M16 12h3M16 20h3" stroke-dasharray="1 1"/></svg></button>
          <button aria-label="状态条"><svg viewBox="-.5 -.5 27 27"><path d="M4 20v-9h20" stroke="#fff"/><path d="M4 20h7v-9M11 20h13v-9M12 20l3-4h6M14 20l7-8" stroke="#808080"/><path d="M5 21h19v-9"/></svg></button>
          <button aria-label="影像列表"><svg viewBox="-.5 -.5 27 27"><path d="M3 8h22v11h-22z" fill="#ece9d8" stroke="#808080"/><path d="M5 9h10v10h-10z" fill="#fff" stroke="#808080"/><path d="M7 10h4l2 2v5h-6zM16 8v11M18 9h7M18 19h7"/><path d="M20 13h3v4h-3z" fill="#aa0"/></svg></button>
          <button aria-label="列表视图"><svg viewBox="0 0 27 27"><path d="M3 4h22v21H3z" fill="#fff" stroke="none"/><path d="M3 4h21v1H4v20H3z" fill="#000" stroke="none"/><path d="M7 6h2v2H7zM17 6h2v2h-2zM12 11h2v2h-2zM7 16h2v2H7z" fill="#f00" stroke="none"/><path d="M12 6h2v2h-2zM7 11h2v2H7zM17 11h2v2h-2z" fill="#fc0" stroke="none"/><path d="M9 7h1v1H9zM14 7h1v1h-1zM19 7h1v1h-1zM9 12h1v1H9zM14 12h1v1h-1zM19 12h1v1h-1zM9 17h1v1H9z" fill="#00f" stroke="none"/><path d="M6 9h3v1H6zM11 9h3v1h-3zM16 9h3v1h-3zM6 14h3v1H6zM11 14h3v1h-3zM16 14h3v1h-3zM6 19h3v1H6z" fill="#000" stroke="none"/></svg></button>

          <button aria-label="透明标签"><svg viewBox="0 0 27 27"><text x="5" y="21" font-size="17" font-weight="700">透</text></svg></button>
          <button aria-label="动画框"><svg viewBox="-.5 -.5 27 27"><path d="M4 5h20l1 1v16h-21l-1-1v-15z" fill="#fff"/><path d="M6 19l5-5 3 4 2-2 5 3M9 19l2-3 3 3M15 19l1-2 3 2"/><path d="M16 9h2v2h-2z" fill="#ff0"/></svg></button>
          <button aria-label="多媒体"><svg viewBox="0 0 27 27"><path d="M8 7h13v15H8z" fill="#dd2" stroke="none"/><path d="M8 8h2v2H8zM8 12h2v2H8zM8 16h2v2H8zM8 20h2v2H8zM19 8h2v2h-2zM19 12h2v2h-2zM19 16h2v2h-2zM19 20h2v2h-2zM11 7h1v15h-1zM17 7h1v15h-1z" fill="#660" stroke="none"/><path d="M12 9h5v11h-5z" fill="#ff4" stroke="none"/><path d="M13 11h1v-1h1v7h1v1h-3v-1h1v-5h-1z" fill="#000" stroke="none"/></svg></button>
          <button aria-label="分隔条"><svg viewBox="-.5 -.5 27 27"><path d="M10 22v-16h3v6h10M5 12h5M13 15v7" stroke="#fff"/><path d="M12 6v16M5 14h5M13 14h10" stroke="#808080"/><path d="M15 18h7"/><path d="M15 18l2-2v4zM22 18l-2-2v4z" fill="#000"/></svg></button>

          <button aria-label="高级编辑框"><svg viewBox="0 0 27 27"><path d="M6 7h7v7H6z" fill="#000" stroke="none"/><path d="M7 8h2v2H7z" fill="#f00" stroke="none"/><path d="M10 8h2v2h-2z" fill="#00f" stroke="none"/><path d="M7 11h2v2H7z" fill="#fff" stroke="none"/><path d="M10 11h2v2h-2z" fill="#ff0" stroke="none"/><path d="M14 8h8v1h-8zM14 10h6v1h-6zM14 12h8v1h-8zM6 15h15v1H6zM6 17h9v1H6zM6 19h7v1H6zM6 21h7v1H6z" fill="#880" stroke="none"/><path d="M14.500 22l6-8 1 8M16 19.500h5M13 22.500h3M19 22.500h4" stroke="#00f"/></svg></button>
          <button aria-label="OCX组件"><svg viewBox="-.5 -.5 27 27"><text x="5" y="16" font-size="10" font-weight="700" font-family="Liberation Mono" class="fill-[#800080]!">OCX</text></svg></button>
        </div>
      </div>
    </aside>
  </main>

  <!-- output panel -->
  <section class="h-[187px] shrink-0 flex flex-col border-t border-white">
    <div class="h-1 shrink-0 border-b border-[#aca899]"></div>
    <div class="flex-1 min-h-0 flex mb-1 pt-[2px] pr-1 border-t border-white">
      <div class="w-[15px] shrink-0 flex flex-col items-center gap-[1px] pt-[1px]">
        <button aria-label="关闭输出" class="size-3 shadow-[inset_-1px_-1px_#716f64,inset_1px_1px_#fff]"><svg class="size-3"><use href="#cls"/></svg></button>
        <button aria-label="停靠输出" class="size-3 shadow-[inset_-1px_-1px_#716f64,inset_1px_1px_#fff]"><svg class="size-3"><use href="#max"/></svg></button>
        <span class="flex-1 w-[3px] mt-[3px] border-l border-white border-r border-r-[#aca899]"></span>
      </div>
      <div class="flex-1 min-w-0 flex flex-col ml-[3px]">
        <div class="h-5 shrink-0 flex items-end pl-[2px] [&_svg]:size-[18px] [&_svg]:fill-none [&_button]:flex [&_button]:items-center [&_button]:h-[19px] [&_button]:whitespace-nowrap [&_button]:border-t [&_button]:border-l [&_button]:border-white [&_button]:border-r-2 [&_button]:border-r-[#8a877a]">
          <button class="w-[57px] pl-[4px] gap-[5px] border-r-0!"><svg viewBox="-.5 -.5 18 18" stroke="#000"><path d="M4 5l2-3h5l2 3v3l-4 3v1h-2v-3l3-3v-2h-3v2h-3zM7 14h2v2h-2z" fill="#ff0"/></svg>提示</button>
          <button class="w-[60px] h-[21px]! pl-[5px] gap-[4px] pb-[2px]"><svg viewBox="-.5 -.5 18 18" stroke="#000"><path d="M3 3h11v12h-11z" fill="#fff"/><path d="M3 3h11M3 4h11" stroke="#000080"/><path d="M3 5h11M5 8h4M5 10h6M5 12h3" /></svg>输出</button>
          <button class="w-[69px] pl-[2px] gap-[5px]"><svg viewBox="0 0 18 18"><path d="M5 2h1v5H5zM9 2h1v5H9zM13 2h1v5h-1zM5 11h1v5H5zM9 11h1v5H9zM13 11h1v5h-1zM4 4h3v1H4zM8 4h3v1H8zM12 4h3v1h-3zM4 13h3v1H4zM8 13h3v1H8zM12 13h3v1h-3z" fill="#000"/><path d="M3 9h4v1H3zM8 9h3v1H8zM12 9h4v1h-4z" fill="#00f"/></svg>调用表</button>
          <button class="w-[82px] pl-1 gap-1"><svg viewBox="-.5 -.5 18 18" shape-rendering="auto" stroke="#000"><circle cx="7" cy="7" r="5" fill="#fff"/><path d="M11 11l5 5" stroke-width="2"/></svg>查改变量</button>
        </div>
        <div class="flex-1 min-h-0 flex p-[3px] border-t border-l border-white border-r-2 border-r-[#716f64] border-b-2 border-b-[#716f64]">
          <div class="flex-1 min-w-0 flex relative border-t border-l border-[#716f64] border-r-white border-b-white border-r border-b">
            <textarea aria-label="输出" readonly class="flex-1 resize-none bg-[#b9dcff] outline-none"></textarea>
            <div class="w-[17px] flex flex-col justify-between p-[1px] bg-[linear-gradient(90deg,#f0efe8,#fefefb)]">
              <button aria-label="输出向上" disabled class="h-4 rounded-[2px] border border-[#d8d5c4] bg-[#f0efe6]"><svg class="w-[13px] h-[14px]" viewBox="0 0 13 14" shape-rendering="auto"><path d="M3 9l4-4 4 4" fill="none" stroke="#c9c7ba" stroke-width="2"/></svg></button>
              <button aria-label="输出向下" disabled class="h-4 rounded-[2px] border border-[#d8d5c4] bg-[#f0efe6]"><svg class="w-[13px] h-[14px]" viewBox="0 0 13 14" shape-rendering="auto"><path d="M3 5l4 4 4-4" fill="none" stroke="#c9c7ba" stroke-width="2"/></svg></button>
            </div>
            <span class="absolute right-[-2px] bottom-[-1px] font-['Open_Sans'] font-bold text-[22px] leading-[28px] text-[#5a6470]/75">www.skxsj.com</span>
          </div>
        </div>
      </div>
    </div>
    <div class="h-[2px] shrink-0 border-t border-[#aca899] bg-white"></div>
  </section>

</body>
</html>
